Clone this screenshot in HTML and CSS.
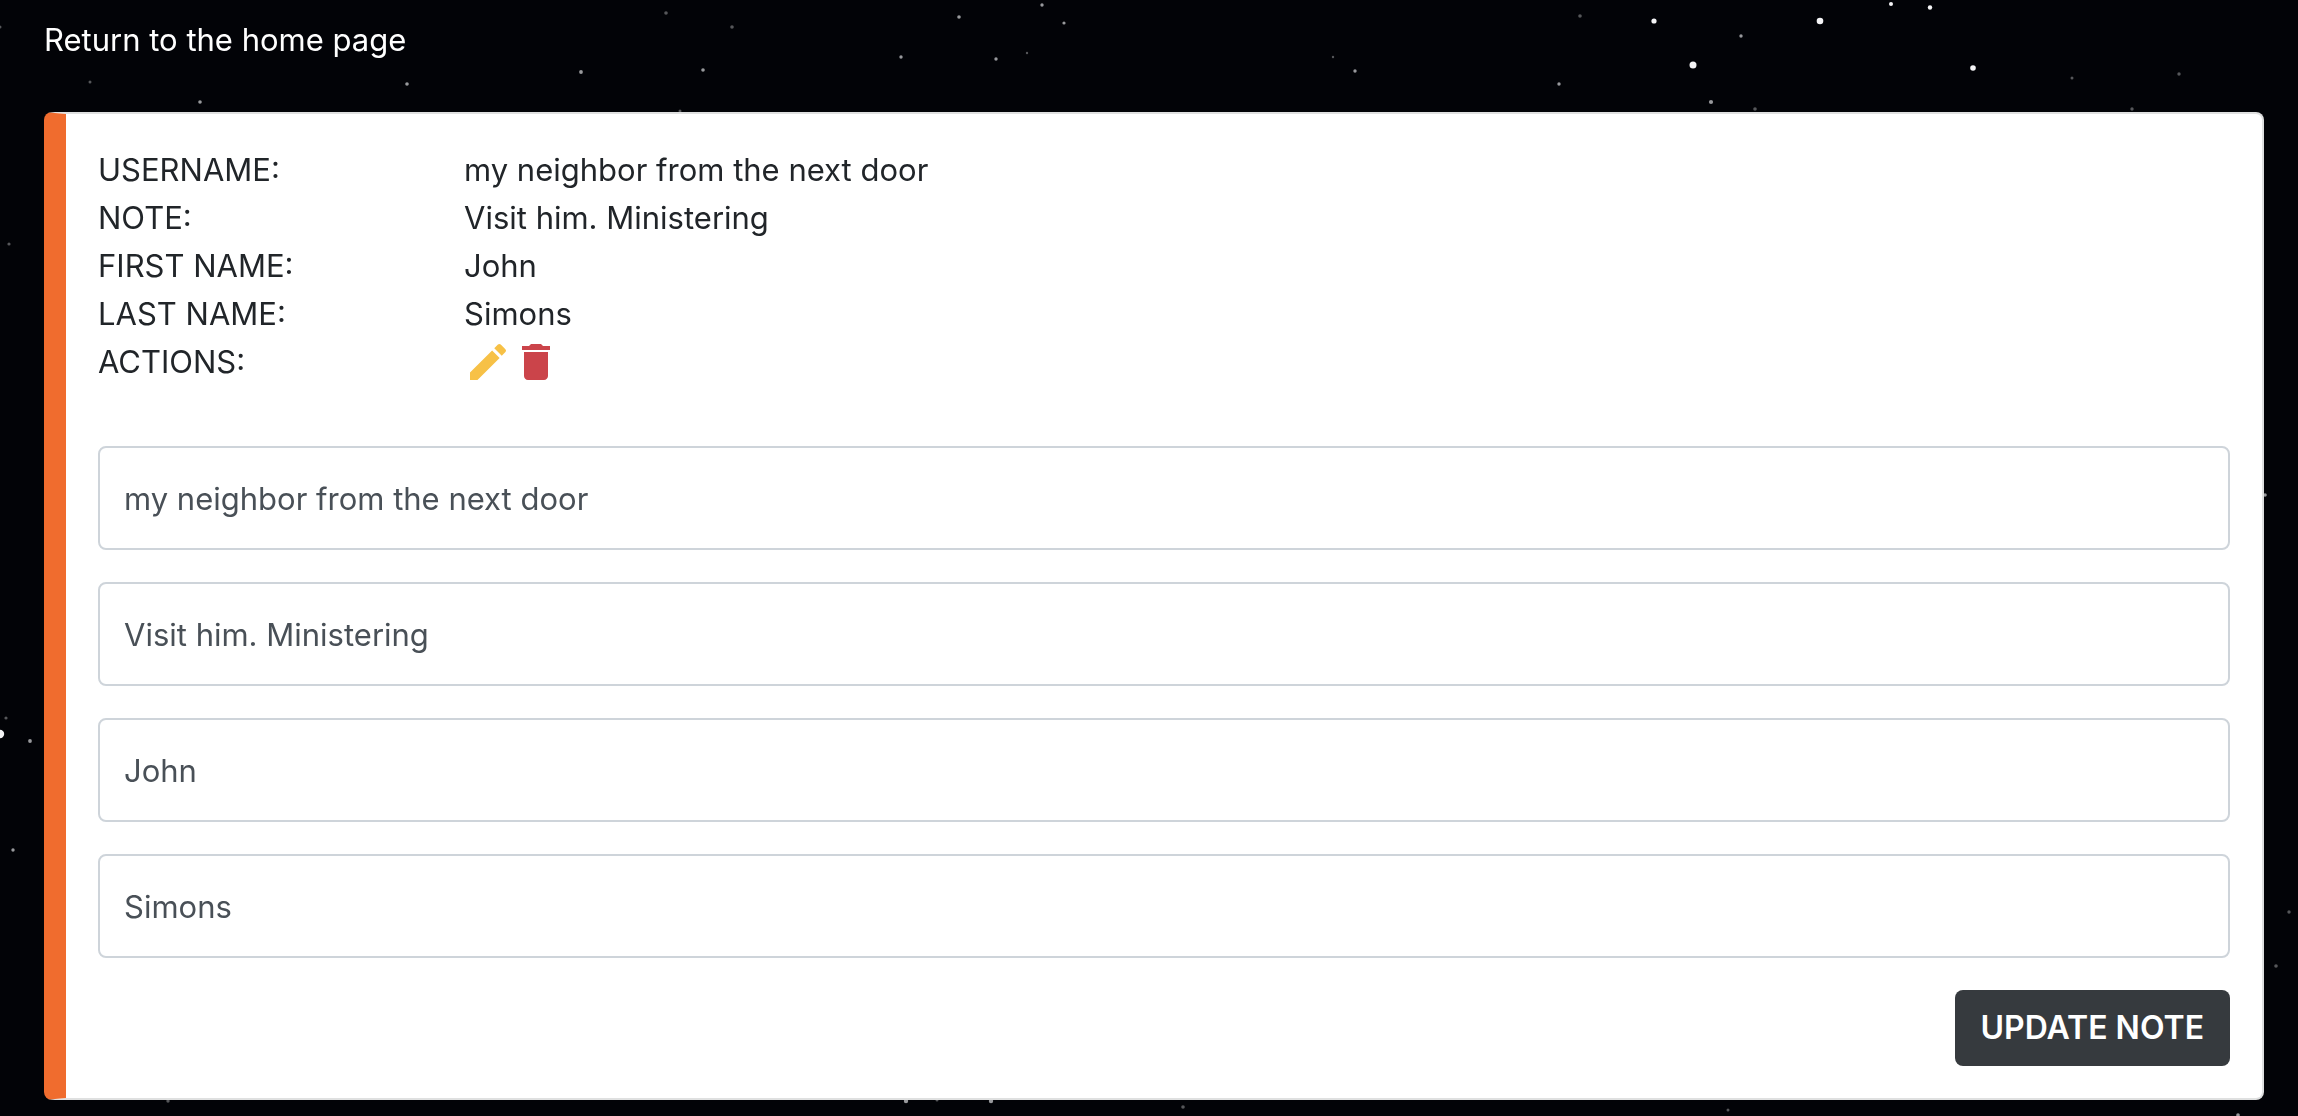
FILE: index.html
```html
<!DOCTYPE html>
<html lang="en">
<head>
  <meta charset="utf-8">
  <meta name="viewport" content="width=device-width, initial-scale=1">
  <title>Edit note</title>
  <link rel="stylesheet" href="styles.css">
</head>
<body>
  <svg class="sky" viewBox="0 0 2298 1116" preserveAspectRatio="xMidYMid slice" aria-hidden="true">
    <g class="stars-bright">
      <circle cx="1654" cy="21" r="2.6"/><circle cx="1693" cy="65" r="3.5"/><circle cx="1820" cy="21" r="3.3"/>
      <circle cx="1973" cy="68" r="2.8"/><circle cx="0" cy="734" r="4.2"/><circle cx="1891" cy="4" r="2"/>
      <circle cx="1930" cy="7.5" r="2.2"/>
    </g>
    <g class="stars-medium">
      <circle cx="200" cy="102" r="1.8"/><circle cx="407" cy="84" r="1.8"/><circle cx="581" cy="72" r="1.9"/>
      <circle cx="703" cy="70" r="1.8"/><circle cx="901" cy="57" r="1.7"/><circle cx="959" cy="17" r="1.8"/>
      <circle cx="996" cy="59" r="1.7"/><circle cx="1042" cy="5" r="1.7"/><circle cx="1064" cy="23" r="1.6"/>
      <circle cx="1355" cy="71" r="1.7"/><circle cx="1741" cy="36" r="1.7"/><circle cx="1559" cy="84" r="1.7"/>
      <circle cx="1711" cy="102" r="2.1"/><circle cx="30" cy="741" r="1.9"/><circle cx="13" cy="850" r="1.7"/>
      <circle cx="2265" cy="495" r="1.8"/><circle cx="906" cy="1101" r="2.2"/><circle cx="991" cy="1101" r="2.2"/>
      <circle cx="2238" cy="1115" r="1.8"/>
    </g>
    <g class="stars-dim">
      <circle cx="0" cy="27" r="1.5"/><circle cx="90" cy="82" r="1.5"/><circle cx="666" cy="13" r="1.8"/>
      <circle cx="732" cy="27" r="1.8"/><circle cx="680" cy="111" r="1.5"/><circle cx="1027" cy="53" r="1.2"/>
      <circle cx="1333" cy="57" r="1.2"/><circle cx="1580" cy="16" r="1.8"/><circle cx="2072" cy="78" r="1.5"/>
      <circle cx="2179" cy="74" r="1.7"/><circle cx="1755" cy="109" r="1.8"/><circle cx="2132" cy="109" r="1.7"/>
      <circle cx="9" cy="244" r="1.6"/><circle cx="6" cy="718" r="1.6"/><circle cx="2289" cy="912" r="1.7"/>
      <circle cx="2276" cy="966" r="1.8"/><circle cx="168" cy="1101" r="1.7"/><circle cx="937" cy="1100" r="1.5"/>
      <circle cx="1183" cy="1107" r="1.8"/><circle cx="1728" cy="1110" r="1.5"/>
    </g>
  </svg>

  <nav class="topbar">
    <a class="home-link" href="#">Return to the home page</a>
  </nav>

  <main class="card">
    <dl class="details">
      <dt>USERNAME:</dt>
      <dd>my neighbor from the next door</dd>
      <dt>NOTE:</dt>
      <dd>Visit him. Ministering</dd>
      <dt>FIRST NAME:</dt>
      <dd>John</dd>
      <dt>LAST NAME:</dt>
      <dd>Simons</dd>
      <dt>ACTIONS:</dt>
      <dd class="actions">
        <button class="icon-button icon-button-edit" type="button" aria-label="Edit">
          <svg viewBox="0 0 24 24" aria-hidden="true"><path d="M3 17.25V21h3.75L17.81 9.94l-3.75-3.75L3 17.25zM20.71 7.04a1 1 0 0 0 0-1.41l-2.34-2.34a1 1 0 0 0-1.41 0l-1.83 1.83 3.75 3.75 1.83-1.83z"/></svg>
        </button>
        <button class="icon-button icon-button-delete" type="button" aria-label="Delete">
          <svg viewBox="0 0 24 24" aria-hidden="true"><path d="M6 19c0 1.1.9 2 2 2h8c1.1 0 2-.9 2-2V7H6v12zM19 4h-3.5l-1-1h-5l-1 1H5v2h14V4z"/></svg>
        </button>
      </dd>
    </dl>

    <form class="note-form">
      <input class="field" type="text" aria-label="Username" value="my neighbor from the next door">
      <input class="field" type="text" aria-label="Note" value="Visit him. Ministering">
      <input class="field" type="text" aria-label="First name" value="John">
      <input class="field" type="text" aria-label="Last name" value="Simons">
      <button class="submit" type="submit">UPDATE NOTE</button>
    </form>
  </main>
</body>
</html>
```

FILE: styles.css
```css
*,
*::before,
*::after {
  box-sizing: border-box;
}

body {
  margin: 0;
  padding: 16px 34px 16px 44px;
  background: #020307;
  color: #212529;
  font-family: Inter, "Liberation Sans", sans-serif;
  font-size: 31px;
  line-height: 48px;
}

/* Starry backdrop behind the page */
.sky {
  position: fixed;
  inset: 0;
  z-index: -1;
  width: 100%;
  height: 100%;
}

.stars-bright {
  fill: #f4f4f6;
}

.stars-medium {
  fill: #98999c;
}

.stars-dim {
  fill: #56575a;
}

.topbar {
  margin-bottom: 48px;
}

.home-link {
  color: #fff;
  text-decoration: none;
}

.card {
  padding: 32px;
  border: 2px solid #dfe0e0;
  border-left: 22px solid #f06c2e;
  border-radius: 8px;
  background: #fff;
}

.details {
  display: grid;
  grid-template-columns: 1fr 5fr;
  margin: 0 -32px 60px;
}

.details dt,
.details dd {
  margin: 0;
  padding: 0 32px;
}

.actions {
  display: flex;
}

.icon-button {
  width: 48px;
  height: 48px;
  padding: 0;
  border: 0;
  background: none;
  cursor: pointer;
}

.icon-button svg {
  display: block;
  fill: currentColor;
}

.icon-button-edit {
  color: #f7c146;
}

.icon-button-delete {
  color: #cb444a;
}

.note-form {
  display: flex;
  flex-direction: column;
  gap: 32px;
}

.field {
  width: 100%;
  height: 104px;
  padding: 0 24px;
  border: 2px solid #ced4da;
  border-radius: 8px;
  background: #fff;
  color: #495057;
  font: inherit;
}

.submit {
  align-self: flex-end;
  padding: 14px 26px;
  border: 0;
  border-radius: 8px;
  background: #363a3e;
  color: #fff;
  font: inherit;
  font-size: 32px;
  font-weight: 600;
  cursor: pointer;
}
```
